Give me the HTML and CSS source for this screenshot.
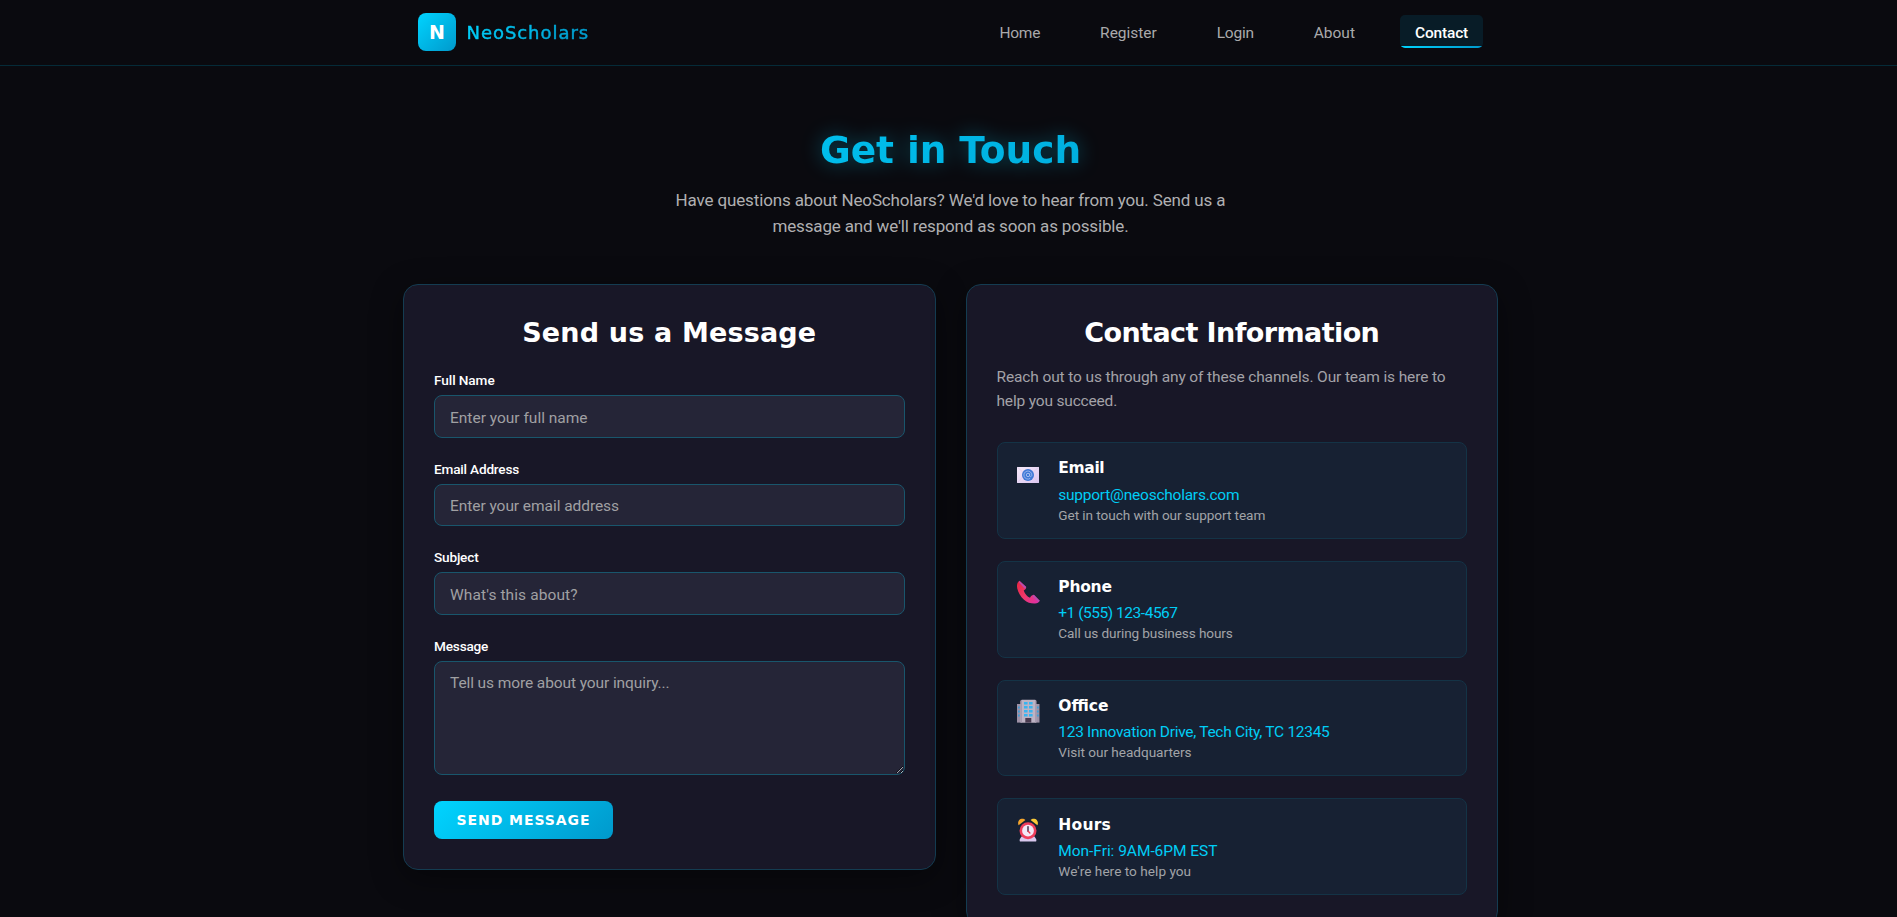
FILE: index.html
```html
<!DOCTYPE html>
<html lang="en">
<head>
<meta charset="utf-8">
<title>NeoScholars - Contact</title>
<link rel="stylesheet" href="styles.css">
</head>
<body>
<header class="navbar">
  <div class="nav-inner">
    <a class="brand"><span class="brand-mark">N</span><span class="brand-name">NeoScholars</span></a>
    <nav class="nav-links">
      <a class="nav-link home">Home</a>
      <a class="nav-link register">Register</a>
      <a class="nav-link login">Login</a>
      <a class="nav-link about">About</a>
      <a class="nav-link active">Contact</a>
    </nav>
  </div>
</header>
<main class="page">
  <section class="hero">
    <h1 class="hero-title">Get in Touch</h1>
    <p class="hero-text">Have questions about NeoScholars? We'd love to hear from you. Send us a<br><span class="hero-second">message and we'll respond as soon as possible.</span></p>
  </section>
  <div class="columns">
    <section class="card">
      <h2 class="card-title">Send us a Message</h2>
      <form class="form">
        <div class="field"><label class="label name">Full Name</label><input class="input name" type="text" placeholder="Enter your full name"></div>
        <div class="field"><label class="label">Email Address</label><input class="input email" type="text" placeholder="Enter your email address"></div>
        <div class="field"><label class="label">Subject</label><input class="input subject" type="text" placeholder="What's this about?"></div>
        <div class="field message"><label class="label">Message</label><textarea class="input area" placeholder="Tell us more about your inquiry..."></textarea></div>
        <button class="submit" type="button">SEND MESSAGE</button>
      </form>
    </section>
    <section class="card">
      <h2 class="card-title info">Contact Information</h2>
      <p class="intro">Reach out to us through any of these channels. Our team is here to<br><span class="intro-second">help you succeed.</span></p>
      <div class="items">
        <article class="item">
          <svg class="icon" viewBox="0 0 24 24">
            <defs><linearGradient id="env" x1="0" y1="0" x2="1" y2="1"><stop offset="0" stop-color="#f6eafa"/><stop offset="1" stop-color="#dcc6f0"/></linearGradient></defs>
            <rect x="1" y="5" width="22" height="16" fill="url(#env)"/>
            <path d="M1 5L12 14.500 23 5M1 21L9 12.500M23 21L15 12.500" fill="none" stroke="#d6c4e8" stroke-width=".6"/>
            <circle cx="12" cy="13" r="6" fill="#3f78d6"/>
            <circle cx="12" cy="13" r="1.700" fill="none" stroke="#a9c2f2" stroke-width=".9"/>
            <path d="M13.700 11.300v2.300c0 1.500 2.200 1.300 2.200-.6a4 4 0 1 0-1.800 3.400" fill="none" stroke="#a9c2f2" stroke-width=".8"/>
          </svg>
          <div><h3 class="item-title t-email">Email</h3><p class="item-value v-email">support@neoscholars.com</p><p class="item-note n-email">Get in touch with our support team</p></div>
        </article>
        <article class="item">
          <svg class="icon" viewBox="0 0 24 24">
            <defs><linearGradient id="tel" x1="0" y1="0" x2="1" y2="1"><stop offset="0" stop-color="#e8243f"/><stop offset=".5" stop-color="#f0386a"/><stop offset="1" stop-color="#dc2fae"/></linearGradient></defs>
            <path d="M3.400.8C1.200 2.200.6 4.800 1.200 8.200c.8 4 3.300 8.400 6.800 11.500 3.300 2.900 7.200 4 11 3.800 2.400-.2 4-1.300 4.700-2.800l-5.900-5.900c-1.700.3-3.300 1.500-3.800 2.900-2.800-1.200-5.100-3.900-6.300-7.300 1.700-.7 2.500-2 2.500-3.500z" fill="url(#tel)"/>
            <path d="M3.400.8L10.200 6.900 9.100 9 3 2.500zM17.800 14.800l5.900 5.900-1.200 1.400-6.300-6z" fill="#b84cae"/>
          </svg>
          <div><h3 class="item-title t-phone">Phone</h3><p class="item-value v-phone">+1 (555) 123-4567</p><p class="item-note n-phone">Call us during business hours</p></div>
        </article>
        <article class="item">
          <svg class="icon" viewBox="0 0 24 24">
            <path d="M1 5h22.500v18.600H1z" fill="#9d91a6"/>
            <path d="M4.500 1.800L6 .8h13l1.300 1v21.800H4.500z" fill="#bdb3c4"/>
            <path d="M4.500 1.800L6 .8v22.800H4.500zM19 .8l1.300 1v21.800H19z" fill="#a79bb0"/>
            <path d="M8 3h3.600v2.500H8zM13 3h3.600v2.500H13zM8 7h3.600v2.500H8zM13 7h3.600v2.500H13zM8 11h3.600v2.500H8zM13 11h3.600v2.500H13zM8 15h3.600v2.500H8zM13 15h3.600v2.500H13z" fill="#39b4f0"/>
            <path d="M2 7.500h1.800v2H2zM2 11.500h1.800v2H2zM2 15.500h1.800v2H2zM20.900 7.500h1.800v2h-1.800zM20.900 11.500h1.800v2h-1.800zM20.900 15.500h1.800v2h-1.800z" fill="#3f9ed6"/>
            <path d="M9.300 19h6v4.600h-6z" fill="#493b50"/>
          </svg>
          <div><h3 class="item-title t-office">Office</h3><p class="item-value v-office">123 Innovation Drive, Tech City, TC 12345</p><p class="item-note n-office">Visit our headquarters</p></div>
        </article>
        <article class="item">
          <svg class="icon" viewBox="0 0 24 24">
            <path d="M2.600 7.200C1.300 4.600 2.700 1.300 5.600.8c1.500-.2 2.900.3 3.800 1.300z" fill="#f6a52c"/>
            <path d="M21.400 7.200c1.300-2.600-.1-5.900-3-6.400-1.500-.2-2.900.3-3.800 1.300z" fill="#f8c938"/>
            <path d="M5.500 18.500h13l1.700 2.700c.4.800.2 2.400-.7 2.400h-15c-.9 0-1.100-1.600-.7-2.400z" fill="#d9c8ee"/>
            <circle cx="12" cy="12.700" r="8.500" fill="#ef3d5c"/>
            <circle cx="12" cy="12.700" r="5.900" fill="#f3e7f7"/>
            <path d="M12 8.800v4.400" stroke="#3b2a44" stroke-width="1.400" stroke-linecap="round"/>
            <path d="M12.200 13.200l1.700 1.800" stroke="#e8384f" stroke-width="1.300" stroke-linecap="round"/>
          </svg>
          <div><h3 class="item-title t-hours">Hours</h3><p class="item-value v-hours">Mon-Fri: 9AM-6PM EST</p><p class="item-note n-hours">We're here to help you</p></div>
        </article>
      </div>
    </section>
  </div>
</main>
</body>
</html>
```
FILE: styles.css
```css
* { box-sizing: border-box; margin: 0; padding: 0; }

html, body { height: 100%; overflow: hidden; }

body {
  background: #0a0a0f;
  color: #fff;
  font-family: Roboto, sans-serif;
  font-size: 15.5px;
}

.brand-mark, .brand-name, .hero-title, .card-title, .submit, .item-title {
  font-family: "DejaVu Sans", sans-serif;
}

/* Navigation */
.navbar { height: 66px; border-bottom: 1px solid #052b38; }
.nav-inner {
  display: flex;
  justify-content: space-between;
  align-items: flex-start;
  width: 1095px;
  margin-left: 403px;
  padding: 13px 15px 0;
}
.brand { display: flex; align-items: center; gap: 10.5px; }
.brand-mark {
  display: flex;
  align-items: center;
  justify-content: center;
  width: 38px;
  height: 38px;
  border-radius: 8px;
  background: linear-gradient(135deg, #00d4ff, #0099cc);
  font-size: 19px;
  font-weight: bold;
}
.brand-name {
  font-size: 18px;
  letter-spacing: .95px;
  background: linear-gradient(135deg, #00d4ff, #0099cc);
  -webkit-background-clip: text;
  background-clip: text;
  color: transparent;
  -webkit-text-stroke: .5px transparent;
}
.nav-links { display: flex; gap: 30px; padding-top: 2px; }
.nav-link {
  padding: 9px 15px 5px;
  line-height: 19px;
  color: #a9a9ab;
  border-radius: 5px;
}
.home { letter-spacing: -.27px; }
.register { letter-spacing: -.02px; }
.login { letter-spacing: -.25px; }
.nav-link.active {
  width: 83px;
  color: #fff;
  font-weight: 500;
  letter-spacing: -.18px;
  background: linear-gradient(90deg, #00d4ff, #0099cc) bottom / 100% 2px no-repeat, #081c27;
}

/* Hero */
.page { width: 1095px; margin-left: 403px; padding-top: 61px; }
.hero { text-align: center; height: 157px; }
.hero-title {
  font-size: 37.5px;
  line-height: 46px;
  letter-spacing: -.06px;
  background: linear-gradient(135deg, #00d4ff, #0099cc);
  -webkit-background-clip: text;
  background-clip: text;
  color: transparent;
  filter: drop-shadow(0 0 10px rgba(0, 212, 255, .35));
}
.hero-text {
  margin-top: 14px;
  font-size: 17px;
  line-height: 26.4px;
  letter-spacing: -.14px;
  color: #b0b0b2;
}
.hero-second { letter-spacing: -.157px; }

/* Cards */
.columns { display: grid; grid-template-columns: 1fr 1fr; gap: 30px; align-items: start; }
.card {
  padding: 30px;
  border: 1px solid #143c51;
  border-radius: 15px;
  background: #181727;
  box-shadow: 0 8px 32px rgba(0, 0, 0, .4);
}
.card-title {
  margin-bottom: 20px;
  font-size: 27px;
  line-height: 35px;
  letter-spacing: .165px;
  text-align: center;
}
.card-title.info { margin-bottom: 15px; letter-spacing: -.59px; }

/* Form */
.field { display: flex; flex-direction: column; gap: 5.3px; margin-bottom: 20.900px; }
.field.message { margin-bottom: 26px; }
.label { font-size: 13.6px; line-height: 20px; font-weight: 500; letter-spacing: -.18px; }
.label.name { letter-spacing: -.08px; }
.input {
  width: 100%;
  height: 42.4px;
  padding: 2.2px 15px 0;
  border: 1px solid #19566c;
  border-radius: 8px;
  background: #252537;
  color: #fff;
  font: 15.5px Roboto, sans-serif;
  outline: none;
}
.input::placeholder { color: #a0a0a3; }
.input.email { letter-spacing: -.055px; }
.input.subject { letter-spacing: .1px; }
.input.area {
  display: block;
  height: 114px;
  padding-top: 9px;
  line-height: 24px;
  letter-spacing: -.096px;
  resize: vertical;
  color-scheme: dark;
}
.submit {
  display: block;
  width: 179px;
  height: 38px;
  border: 0;
  border-radius: 8px;
  background: linear-gradient(135deg, #00d4ff, #0099cc);
  color: #fff;
  font-size: 14px;
  font-weight: bold;
  letter-spacing: .93px;
}

/* Contact information */
.intro { margin-bottom: 29px; line-height: 24px; letter-spacing: -.124px; color: #a3a2a8; }
.intro-second { letter-spacing: -.174px; }
.items { display: flex; flex-direction: column; gap: 22px; }
.item {
  display: flex;
  gap: 18.8px;
  height: 96.8px;
  padding: 15.2px 18px 0;
  border: 1px solid #143346;
  border-radius: 8px;
  background: #172133;
}
.icon { width: 24px; height: 24px; margin-top: 3.5px; flex: none; }
.item-title { font-size: 15.5px; line-height: 20px; }
.item-value { margin-top: 4.4px; line-height: 24px; color: #00cdf6; }
.item-note { margin-top: -.9px; font-size: 13.6px; line-height: 18px; color: #a2a4a8; }
.t-email { letter-spacing: -.365px; }
.t-phone { letter-spacing: -.24px; }
.t-hours { letter-spacing: .235px; }
.v-email { letter-spacing: -.244px; }
.v-phone { letter-spacing: -.47px; }
.v-office { letter-spacing: -.292px; }
.v-hours { letter-spacing: -.04px; }
.n-email { letter-spacing: -.068px; }
.n-phone { letter-spacing: -.11px; }
.n-office { letter-spacing: -.03px; }
.n-hours { letter-spacing: .028px; }
```
